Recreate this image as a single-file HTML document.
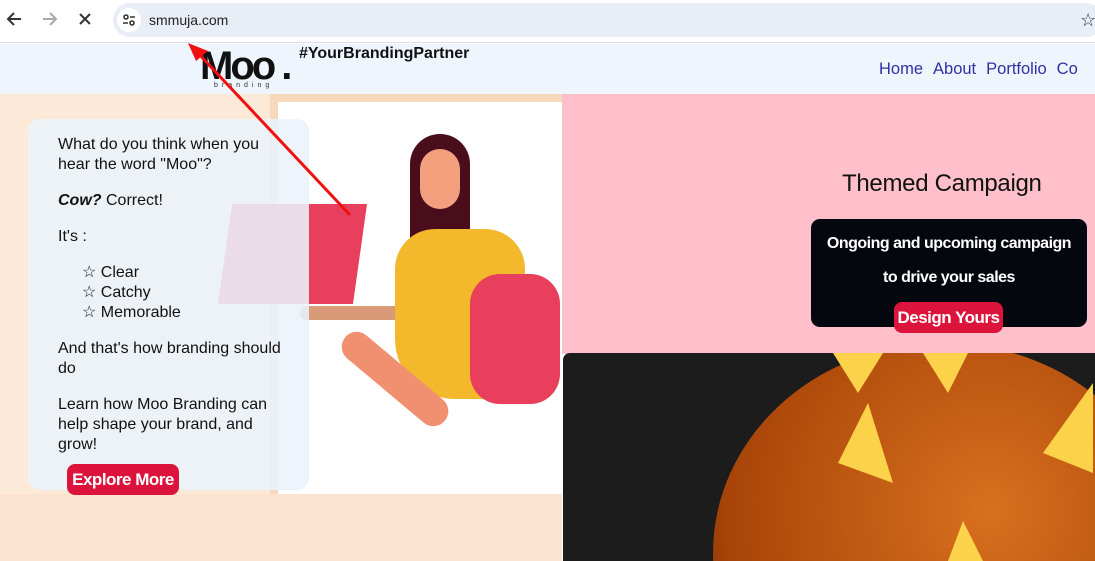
<!DOCTYPE html>
<html><head><style>
*{margin:0;padding:0;box-sizing:border-box}
html,body{width:1095px;height:561px;overflow:hidden}
body{font-family:"Liberation Sans",sans-serif;background:#fff;position:relative}
.bar{position:absolute;left:0;top:0;width:1095px;height:43px;background:#fff;border-bottom:1px solid #dde}
.url{position:absolute;left:113px;top:3px;width:990px;height:34px;background:#e9edf6;border-radius:17px}
.url .ic{position:absolute;left:4px;top:5px;width:24px;height:24px;border-radius:12px;background:#fff}
.url span{position:absolute;left:36px;top:9px;font-size:14px;color:#222}
.nav{position:absolute;top:44px;left:0;width:1095px;height:50px;background:#eef5fd}
.links{position:absolute;left:879px;top:60px;font-size:16.5px;color:#3030a0;white-space:nowrap}
.links span{margin-right:10px}
.left{position:absolute;left:0;top:94px;width:562px;height:467px;background:#fde9d7;overflow:hidden}
.card{position:absolute;left:28px;top:119px;width:281px;height:371px;background:rgba(235,243,252,.88);border-radius:12px;font-size:16px;color:#111;padding:16px 14px 0 30px;line-height:20px}
.card p{margin-bottom:16px}
.btn{position:absolute;background:#dc143c;color:#fff;font-weight:bold;border-radius:8px;font-size:17px;text-align:center;letter-spacing:-0.5px}
.right{position:absolute;left:562px;top:94px;width:533px;height:260px;background:#ffc0cb}
.space{position:absolute;left:811px;top:219px;width:276px;height:108px;background:#05070f;border-radius:9px;color:#fff;font-weight:bold;font-size:16px;text-align:center;letter-spacing:-0.5px}
.pump{position:absolute;left:563px;top:353px;width:532px;height:208px;background:#1c1c1c;border-radius:7px 0 0 0;overflow:hidden}
</style></head><body>
<div class="bar">
<svg width="100" height="40" style="position:absolute;left:0;top:0" fill="none" stroke-width="2">
<path d="M21 19H8M14 13l-6 6 6 6" stroke="#333"/><path d="M43 19h13M50 13l6 6-6 6" stroke="#aaa"/><path d="M80 14l10 10M90 14l-10 10" stroke="#333"/></svg>
<div class="url"><div class="ic"><svg width="24" height="24" fill="none" stroke="#333" stroke-width="1.6"><circle cx="9" cy="9" r="2"/><path d="M13 9h5M6 15h5"/><circle cx="15" cy="15" r="2"/></svg></div><span>smmuja.com</span></div>
<div style="position:absolute;left:1080px;top:10px;font-size:18px;color:#333">☆</div>
</div>
<div class="nav"></div>
<div style="position:absolute;left:200px;top:44px;font-size:40px;font-weight:bold;letter-spacing:-3px;color:#111">Moo<span style="margin-left:8px">.</span></div>
<div style="position:absolute;left:214px;top:82px;font-size:7px;letter-spacing:4px;color:#333">branding</div>
<div style="position:absolute;left:299px;top:45px;font-size:16px;font-weight:bold;color:#111">#YourBrandingPartner</div>
<div class="links"><span>Home</span><span>About</span><span>Portfolio</span><span>Co</span></div>
<div class="left">
<div style="position:absolute;left:270px;top:0px;width:300px;height:420px;background:#fff;border:8px solid #f6d8bb"></div>
<div style="position:absolute;left:0;top:400px;width:562px;height:70px;background:#fbe3cf"></div>
<div style="position:absolute;left:225px;top:110px;width:135px;height:100px;background:#e8405c;transform:skewX(-8deg)"></div>
<div style="position:absolute;left:300px;top:212px;width:200px;height:14px;background:#d99a78;border-radius:6px"></div>
<div style="position:absolute;left:410px;top:40px;width:60px;height:120px;background:#4a0d1c;border-radius:30px 30px 10px 10px"></div>
<div style="position:absolute;left:420px;top:55px;width:40px;height:60px;background:#f4a07e;border-radius:20px"></div>
<div style="position:absolute;left:395px;top:135px;width:130px;height:170px;background:#f4b82d;border-radius:40px 40px 30px 60px"></div>
<div style="position:absolute;left:470px;top:180px;width:90px;height:130px;background:#e8405c;border-radius:30px"></div>
<div style="position:absolute;left:330px;top:270px;width:130px;height:30px;background:#f09070;transform:rotate(40deg);border-radius:15px"></div>
</div>
<div class="card">
<p>What do you think when you hear the word "Moo"?</p>
<p><b><i>Cow?</i></b> Correct!</p>
<p>It's :</p>
<p style="padding-left:24px">☆ Clear<br>☆ Catchy<br>☆ Memorable</p>
<p>And that's how branding should do</p>
<p>Learn how Moo Branding can help shape your brand, and grow!</p>
</div>
<div class="btn" style="left:67px;top:464px;width:112px;height:31px;line-height:31px">Explore More</div>
<div class="right"></div>
<div style="position:absolute;left:842px;top:170px;font-size:24px;color:#111;letter-spacing:-0.3px">Themed Campaign</div>
<div class="space"><div style="margin-top:16px">Ongoing and upcoming campaign</div><div style="margin-top:16px">to drive your sales</div></div>
<div class="btn" style="left:894px;top:302px;width:109px;height:31px;line-height:31px">Design Yours</div>
<div class="pump">
<div style="position:absolute;left:150px;top:-10px;width:460px;height:420px;border-radius:50%;background:radial-gradient(circle at 60% 40%,#d8701e,#a84408 70%,#5a2004)"></div>
<svg width="532" height="208" style="position:absolute;left:0;top:0"><g fill="#fbd24a"><path d="M270 0l25 40 25-40zM360 0l25 40 20-40zM275 110l30-60 25 80zM480 100l50-70v90zM385 208l15-40 20 40z"/></g></svg>
</div>
<svg width="1095" height="561" style="position:absolute;left:0;top:0"><path d="M350 215L195 50" stroke="#f01010" stroke-width="3"/><path d="M188 43l20 8-12 10z" fill="#f01010"/></svg>
</body></html>
